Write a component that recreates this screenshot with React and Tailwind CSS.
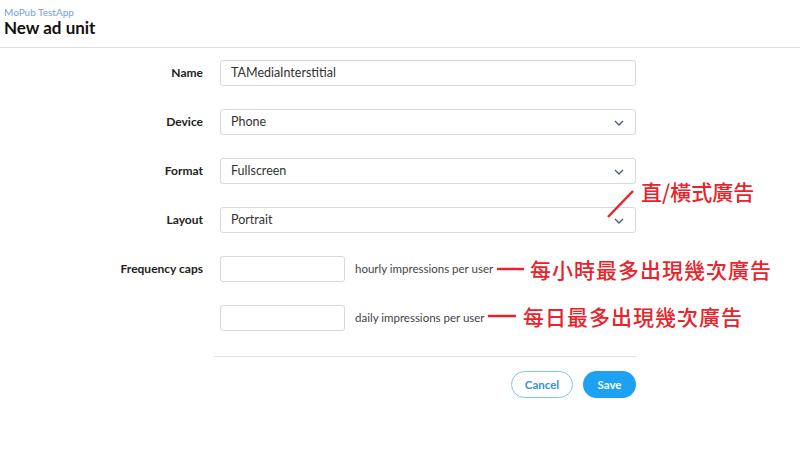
import React from "react";

const font = { fontFamily: 'Lato, "Open Sans", sans-serif' };
const cjk = { fontFamily: '"Noto Sans CJK TC", "Noto Sans CJK SC", sans-serif' };

function Chevron() {
  return (
    <svg width="10" height="6" viewBox="0 0 10 6" className="absolute right-[11px] top-[10px]">
      <path d="M1 1l4 4 4-4" fill="none" stroke="#4a5a70" strokeWidth="1.3" />
    </svg>
  );
}

function Field({ label, children }) {
  return (
    <div className="flex items-center h-[26px]">
      <div className="w-[203px] text-right text-[12px] font-bold text-[#222]">{label}</div>
      <div className="ml-[17px]">{children}</div>
    </div>
  );
}

function Box({ value, select }) {
  return (
    <div className="relative w-[416px] h-[26px] rounded-[3px] border border-[#d3dae3] bg-white flex items-center pl-[10px] text-[12.5px] text-[#333]">
      {value}
      {select && <Chevron />}
    </div>
  );
}

export default function App() {
  return (
    <div className="relative w-[800px] h-[461px] bg-white overflow-hidden" style={font}>
      <div className="h-[48px] border-b border-[#dde1e7] pl-[4px] pt-[6px]">
        <div className="text-[10px] leading-[12px] text-[#6fa1e0]">MoPub TestApp</div>
        <div className="text-[17px] leading-[20px] font-bold text-[#111]">New ad unit</div>
      </div>

      <div className="pt-[12px] flex flex-col gap-[23px]">
        <Field label="Name"><Box value="TAMediaInterstitial" /></Field>
        <Field label="Device"><Box value="Phone" select /></Field>
        <Field label="Format"><Box value="Fullscreen" select /></Field>
        <Field label="Layout"><Box value="Portrait" select /></Field>
        <Field label="Frequency caps">
          <div className="flex items-center">
            <div className="w-[125px] h-[26px] rounded-[3px] border border-[#d3dae3]" />
            <span className="ml-[10px] text-[11.5px] text-[#444]">hourly impressions per user</span>
          </div>
        </Field>
        <Field label="">
          <div className="flex items-center">
            <div className="w-[125px] h-[26px] rounded-[3px] border border-[#d3dae3]" />
            <span className="ml-[10px] text-[11.5px] text-[#444]">daily impressions per user</span>
          </div>
        </Field>
      </div>

      <div className="ml-[214px] w-[422px] mt-[25px] border-t border-[#dfe4ea]" />

      <div className="w-[636px] flex justify-end gap-[10px] mt-[14px]">
        <button className="w-[62px] h-[27px] rounded-full border border-[#7cc4f0] text-[11.5px] font-bold text-[#3a8fd6]">Cancel</button>
        <button className="w-[53px] h-[27px] rounded-full bg-[#1da1f2] text-[11.5px] font-bold text-white">Save</button>
      </div>

      {/* annotations */}
      <svg className="absolute left-0 top-0 pointer-events-none" width="800" height="461">
        <line x1="608" y1="217" x2="633" y2="191" stroke="#e8232b" strokeWidth="2.5" />
        <line x1="497" y1="269" x2="524" y2="269" stroke="#e8232b" strokeWidth="2.5" />
        <line x1="488" y1="316" x2="516" y2="316" stroke="#e8232b" strokeWidth="2.5" />
      </svg>
      <div className="absolute left-[641px] top-[177px] text-[21px] leading-[28px] font-medium text-[#e8232b]" style={cjk}>直/橫式廣告</div>
      <div className="absolute left-[530px] top-[255px] text-[21px] leading-[28px] font-medium text-[#e8232b] tracking-[1px]" style={cjk}>每小時最多出現幾次廣告</div>
      <div className="absolute left-[523px] top-[302px] text-[21px] leading-[28px] font-medium text-[#e8232b] tracking-[1px]" style={cjk}>每日最多出現幾次廣告</div>
    </div>
  );
}
